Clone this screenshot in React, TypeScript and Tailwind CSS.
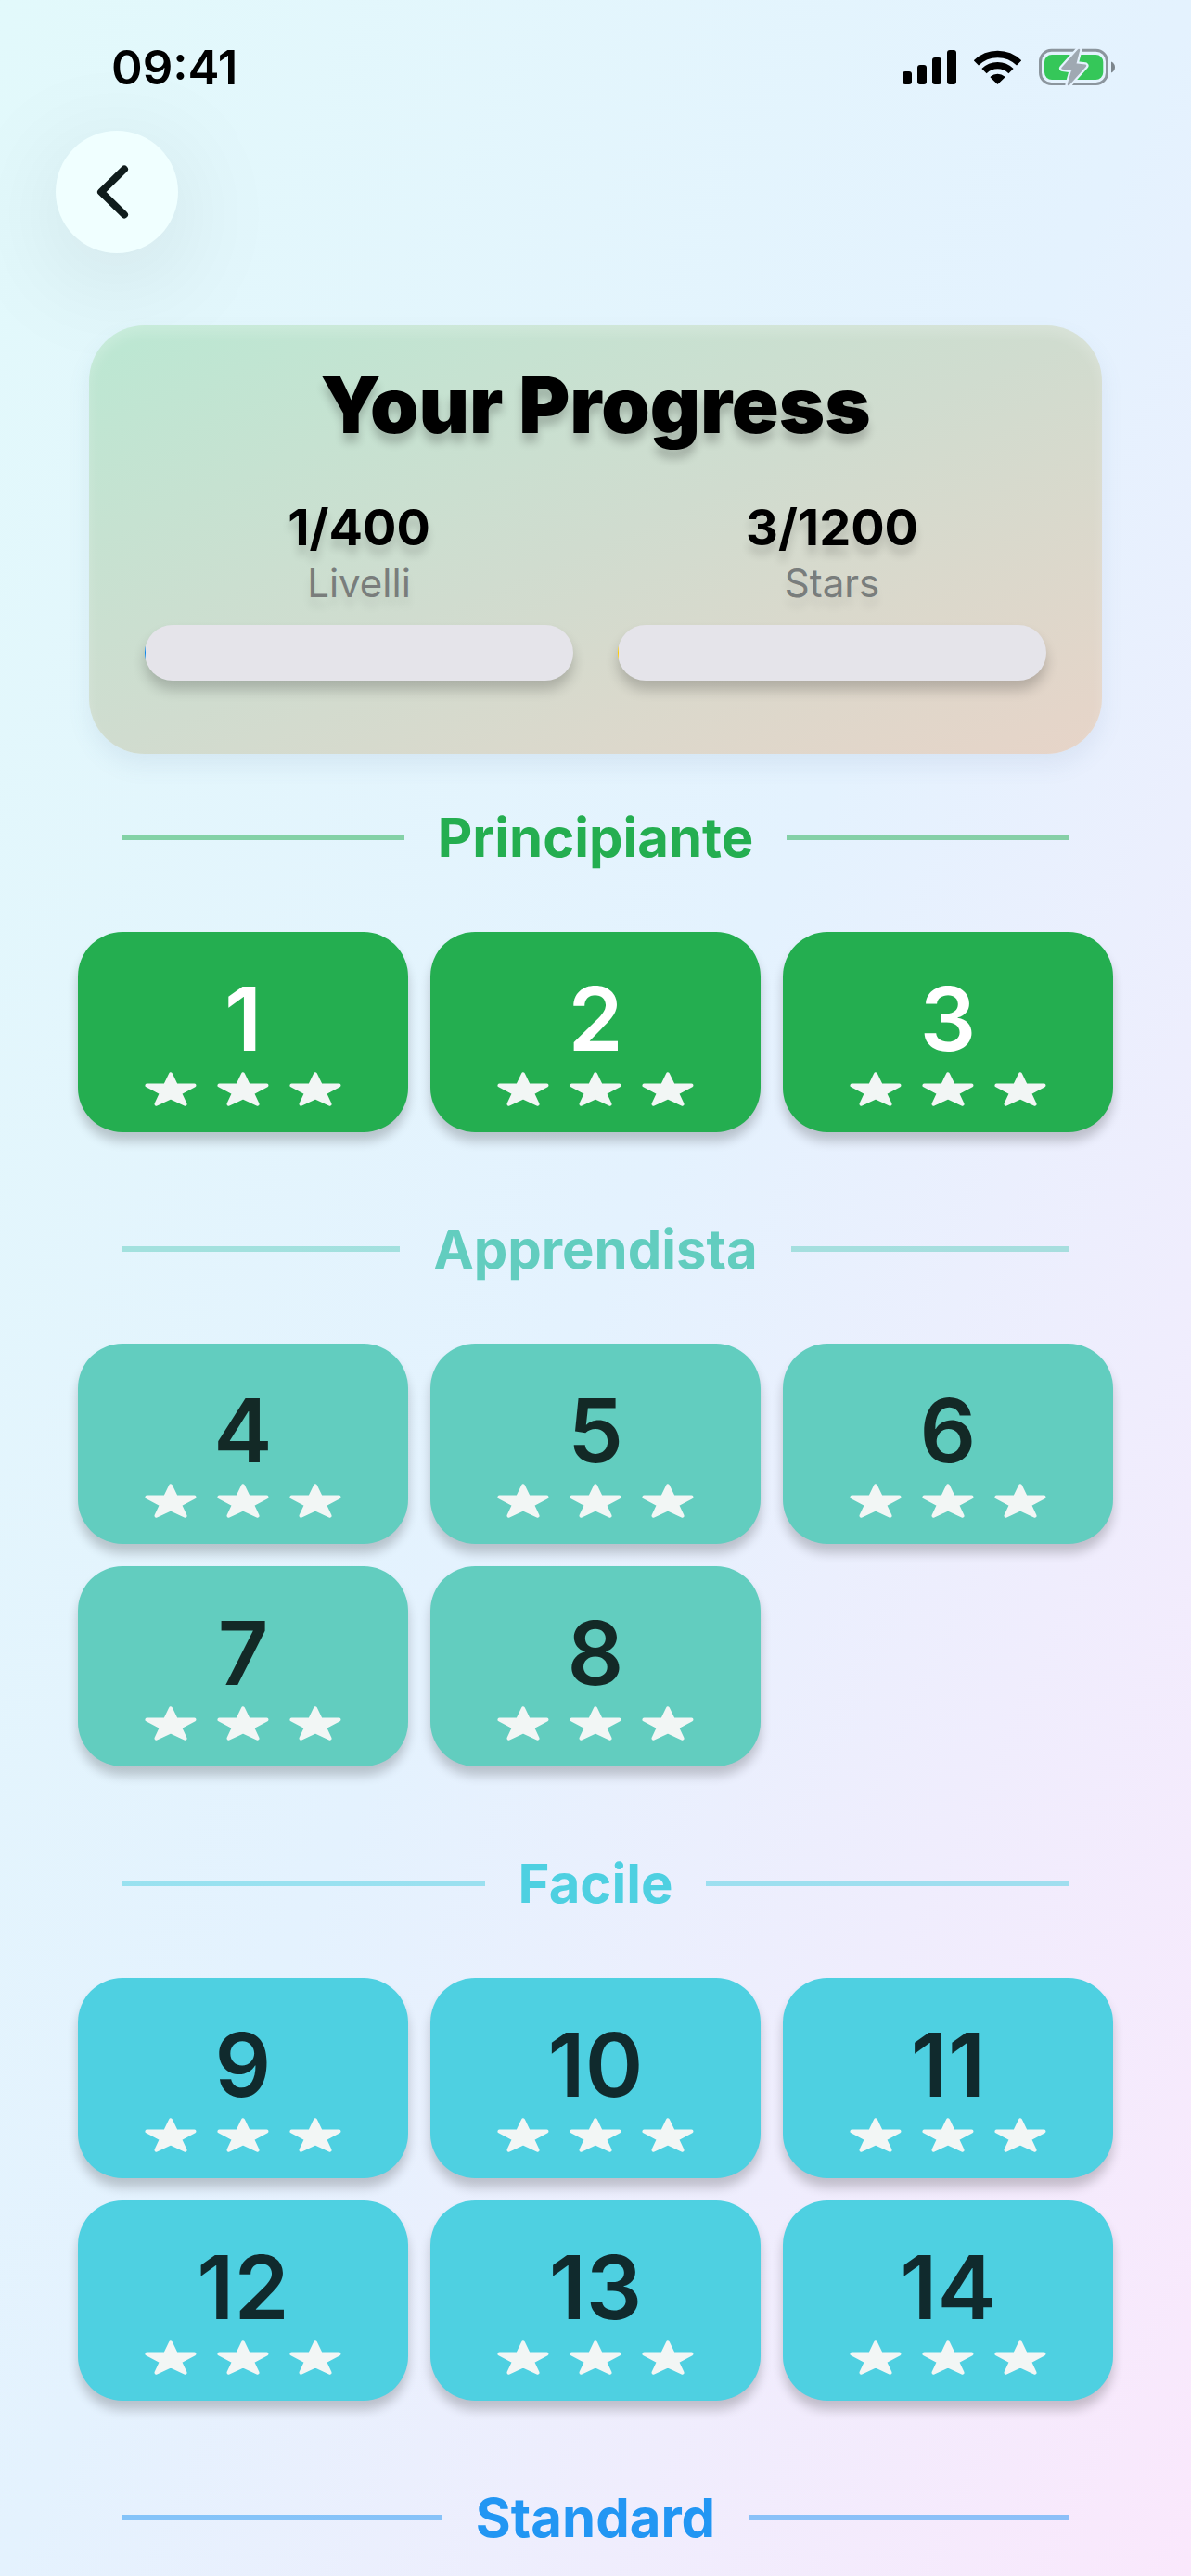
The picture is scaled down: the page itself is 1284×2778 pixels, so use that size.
type Stat = {
    value: number;
    total: number;
    label: string;
    fill: string;
};

type Section = {
    title: string;
    levels: number[];
    text: string;
    line: string;
    tile: string;
};

const stats: Stat[] = [
    { value: 1, total: 400, label: 'Livelli', fill: 'bg-[#0a84e8]' },
    { value: 3, total: 1200, label: 'Stars', fill: 'bg-[#ffcc00]' },
];

const sections: Section[] = [
    {
        title: 'Principiante',
        levels: [1, 2, 3],
        text: 'text-[#24ae50]',
        line: 'bg-[#24ae50]/50',
        tile: 'bg-[#24ae50] text-white',
    },
    {
        title: 'Apprendista',
        levels: [4, 5, 6, 7, 8],
        text: 'text-[#62cdbf]',
        line: 'bg-[#62cdbf]/50',
        tile: 'bg-[#62cdbf] text-[#132926]',
    },
    {
        title: 'Facile',
        levels: [9, 10, 11, 12, 13, 14],
        text: 'text-[#4ed0e1]',
        line: 'bg-[#4ed0e1]/50',
        tile: 'bg-[#4ed0e1] text-[#102a2d]',
    },
    {
        title: 'Standard',
        levels: [],
        text: 'text-[#2296f3]',
        line: 'bg-[#2296f3]/50',
        tile: 'bg-[#2296f3] text-white',
    },
];

function StatusBar() {
    return (
        <div className="flex h-[141px] items-center justify-between pt-1 pr-[82px] pl-[120px]">
            <span className="text-[51px] font-semibold leading-none">09:41</span>
            <div className="flex items-center gap-[19px]">
                <svg width="58" height="37" viewBox="0 0 58 37" aria-label="Signal">
                    <rect x="0" y="23" width="10" height="14" rx="3" />
                    <rect x="16" y="16" width="10" height="21" rx="3" />
                    <rect x="32" y="8" width="10" height="29" rx="3" />
                    <rect x="48" y="0" width="10" height="37" rx="3" />
                </svg>
                <svg width="51" height="37" viewBox="0 0 51 37" fill="none" stroke="#000" strokeWidth="7.4" aria-label="Wi-Fi">
                    <path d="M2.4 13.9A33 33 0 0 1 48.6 13.9" />
                    <path d="M11 22.6A20.6 20.6 0 0 1 40 22.6" />
                    <path d="M25.5 36L18.5 29.2A10.4 10.4 0 0 1 32.5 29.2Z" fill="#000" strokeLinejoin="round" strokeWidth="1.6" />
                </svg>
                <svg width="82" height="41" viewBox="0 0 82 41" fill="none" aria-label="Battery charging">
                    <rect x="1.5" y="2.2" width="72" height="36.3" rx="12" stroke="#8b959d" strokeWidth="3" />
                    <rect x="6" y="7" width="63.3" height="27" rx="8" fill="#35c759" />
                    <path d="M78 14.5c2.6 1.2 4 3.3 4 6s-1.4 4.8-4 6z" fill="#7d868d" />
                    <path d="M43 2L25.5 21.6L36.5 23L32 39L50 18.8L39 17.4Z" fill="#e5f2fe" stroke="#e5f2fe" strokeWidth="7" strokeLinejoin="round" />
                    <path d="M43 2L25.5 21.6L36.5 23L32 39L50 18.8L39 17.4Z" fill="#9fa9b2" stroke="#9fa9b2" strokeWidth="2.5" strokeLinejoin="round" />
                </svg>
            </div>
        </div>
    );
}

function Star() {
    return (
        <svg width="56" height="38" viewBox="0 0 56 38" fill="#f2f6f5" stroke="#f2f6f5" strokeWidth="4" strokeLinejoin="round">
            <path d="M28 2.3L33.8 14.3L53.5 14.5L38 22.8L43.5 34.7L28 27.5L12.5 34.7L18 22.8L2.5 14.5L22.2 14.3Z" />
        </svg>
    );
}

function ProgressCard() {
    return (
        <section className="mx-24 mt-[78px] rounded-[60px] bg-linear-to-br from-[#bbe8d3] via-[#d0dccf] to-[#e7d4c8] px-[60px] pt-9 pb-[79px] shadow-[0_12px_24px_rgba(90,120,160,0.1),inset_0_8px_14px_rgba(255,255,255,0.2)]">
            <h1 className="text-center text-[84px] font-black leading-[100px] [text-shadow:0_10px_10px_rgba(0,0,0,0.2)]">
                Your Progress
            </h1>
            <div className="mt-[50px] grid grid-cols-2 gap-12">
                {stats.map((stat) => (
                    <div key={stat.label} className="text-center">
                        <p className="text-[54px] font-bold leading-[64px] [text-shadow:0_10px_10px_rgba(0,0,0,0.15)]">
                            {stat.value}/{stat.total}
                        </p>
                        <p className="text-[42px] leading-[56px] text-[#797d7c] [text-shadow:0_10px_10px_rgba(0,0,0,0.08)]">
                            {stat.label}
                        </p>
                        <div
                            role="progressbar"
                            aria-label={stat.label}
                            aria-valuenow={stat.value}
                            aria-valuemax={stat.total}
                            className="mt-[17px] h-[60px] overflow-hidden rounded-full bg-[#e5e4ea] shadow-[0_10px_14px_rgba(0,0,0,0.2)]"
                        >
                            <div className={`h-full ${stat.fill}`} style={{ width: `${(stat.value / stat.total) * 100}%` }} />
                        </div>
                    </div>
                ))}
            </div>
        </section>
    );
}

function LevelSection({ section }: { section: Section }) {
    return (
        <section>
            <div className="flex items-center gap-9 px-12">
                <span className={`h-1.5 flex-1 ${section.line}`} />
                <h2 className={`text-[58px] font-bold leading-[72px] ${section.text}`}>{section.title}</h2>
                <span className={`h-1.5 flex-1 ${section.line}`} />
            </div>
            {section.levels.length > 0 && (
                <div className="mt-[66px] grid grid-cols-3 gap-6">
                    {section.levels.map((level) => (
                        <button
                            key={level}
                            className={`flex flex-col items-center rounded-[48px] pt-9 pb-[27px] shadow-[0_10px_12px_rgba(0,0,0,0.2)] ${section.tile}`}
                        >
                            <span className="text-[95px] font-semibold leading-[115px]">{level}</span>
                            <span className="flex gap-[22px]">
                                <Star />
                                <Star />
                                <Star />
                            </span>
                        </button>
                    ))}
                </div>
            )}
        </section>
    );
}

export default function App() {
    return (
        <main className="min-h-screen bg-linear-to-br from-[#e2f9fb] via-[#e4f2fe] to-[#fae8fc] font-['Inter','Liberation_Sans',sans-serif] text-black">
            <StatusBar />
            <nav className="px-[60px]">
                <button
                    aria-label="Back"
                    className="flex size-[132px] items-center justify-center rounded-full bg-[#f0ffff] shadow-[0_24px_120px_rgba(0,0,0,0.1)]"
                >
                    <svg width="44" height="62" viewBox="0 0 44 62" fill="none" stroke="#0f1c1c" strokeWidth="8" strokeLinecap="round" strokeLinejoin="round">
                        <path d="M30 6.5L5 31L30 55.5" />
                    </svg>
                </button>
            </nav>
            <ProgressCard />
            <div className="mt-[54px] flex flex-col gap-[90px] px-[84px]">
                {sections.map((section) => (
                    <LevelSection key={section.title} section={section} />
                ))}
            </div>
        </main>
    );
}
